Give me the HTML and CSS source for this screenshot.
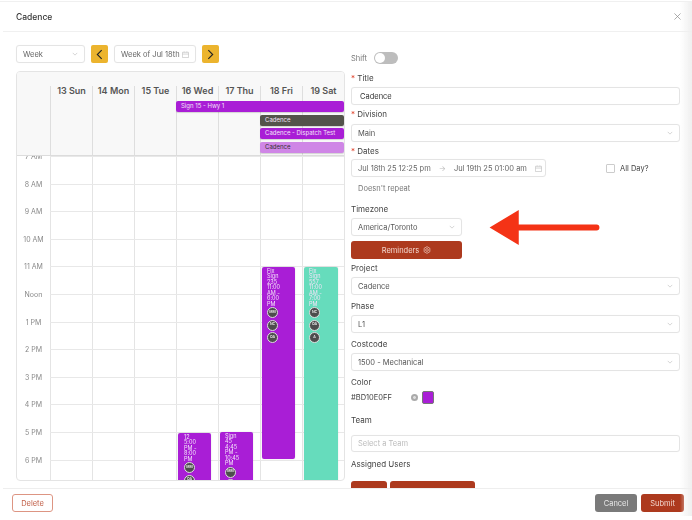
FILE: index.html
```html
<!DOCTYPE html>
<html lang="en">
<head>
<meta charset="utf-8">
<title>Cadence</title>
<link rel="stylesheet" href="styles.css">
</head>
<body>
<div class="modal">
  <header class="modal-head">
    <span class="modal-title">Cadence</span>
    <svg class="close" viewBox="0 0 8 8"><path d="M.5.5l7 7M7.5.5l-7 7"/></svg>
  </header>
  <main class="modal-body">
    <section class="left">
      <div class="toolbar">
        <div class="box view"><span>Week</span><svg class="chev" viewBox="0 0 8 5"><path d="M1 1l3 3 3-3"/></svg></div>
        <button class="nav"><svg viewBox="0 0 8 12"><path d="M6.5 1L1.5 6l5 5"/></svg></button>
        <div class="box week"><span>Week of Jul 18th</span><svg class="cal-ic" viewBox="0 0 8 8"><path d="M.5 1.5h7v6h-7zM.5 3.5h7M2.5.5v1M5.5.5v1"/></svg></div>
        <button class="nav"><svg viewBox="0 0 8 12"><path d="M1.5 1l5 5-5 5"/></svg></button>
      </div>
      <div class="calendar">
        <div class="cal-head">
          <div class="corner"></div>
          <div class="day">13 Sun</div><div class="day">14 Mon</div><div class="day">15 Tue</div><div class="day">16 Wed</div><div class="day">17 Thu</div><div class="day">18 Fri</div><div class="day">19 Sat</div>
        </div>
        <div class="cal-body">
          <div class="row"><span class="time">7 AM</span><div class="track"></div></div>
          <div class="row"><span class="time">8 AM</span><div class="track"></div></div>
          <div class="row"><span class="time">9 AM</span><div class="track"></div></div>
          <div class="row"><span class="time">10 AM</span><div class="track"></div></div>
          <div class="row"><span class="time">11 AM</span><div class="track"></div></div>
          <div class="row"><span class="time">Noon</span><div class="track"></div></div>
          <div class="row"><span class="time">1 PM</span><div class="track"></div></div>
          <div class="row"><span class="time">2 PM</span><div class="track"></div></div>
          <div class="row"><span class="time">3 PM</span><div class="track"></div></div>
          <div class="row"><span class="time">4 PM</span><div class="track"></div></div>
          <div class="row"><span class="time">5 PM</span><div class="track"></div></div>
          <div class="row"><span class="time">6 PM</span><div class="track"></div></div>
        </div>
        <div class="bar bar-sign">Sign 15 - Hwy 1</div>
        <div class="bar bar-grey">Cadence</div>
        <div class="bar bar-dispatch">Cadence - Dispatch Test</div>
        <div class="bar bar-light">Cadence</div>
        <div class="event ev-235">Fix<br>Sign<br>235<br>11:00<br>AM -<br>6:00<br>PM
          <span class="avatar">MM</span><span class="avatar">NC</span><span class="avatar">OA</span></div>
        <div class="event ev-557">Fix<br>Sign<br>557<br>11:00<br>AM -<br>7:00<br>PM
          <span class="avatar">NC</span><span class="avatar">OA</span><span class="avatar">A</span></div>
        <div class="event ev-12">12<br>5:00<br>PM -<br>8:00<br>PM
          <span class="avatar">MM</span><span class="avatar">OA</span></div>
        <div class="event ev-45">Sign<br>45<br>4:45<br>PM -<br>10:45<br>PM
          <span class="avatar">MM</span><span class="avatar">OA</span></div>
      </div>
    </section>
    <section class="form">
      <div class="shift"><span class="muted">Shift</span><span class="toggle"><i></i></span></div>
      <label class="lbl lbl-title"><b>*</b> Title</label>
      <div class="box field title-input">Cadence</div>
      <label class="lbl lbl-a"><b>*</b> Division</label>
      <div class="box field select"><span>Main</span><svg class="chev" viewBox="0 0 8 5"><path d="M1 1l3 3 3-3"/></svg></div>
      <label class="lbl lbl-b"><b>*</b> Dates</label>
      <div class="dates">
        <div class="box range"><span>Jul 18th 25 12:25 pm</span><span class="to">→</span><span>Jul 19th 25 01:00 am</span><svg class="cal-ic" viewBox="0 0 8 8"><path d="M.5 1.5h7v6h-7zM.5 3.5h7M2.5.5v1M5.5.5v1"/></svg></div>
        <div class="allday"><span class="check"></span><span>All Day?</span></div>
      </div>
      <div class="repeat">Doesn't repeat</div>
      <label class="lbl lbl-tz">Timezone</label>
      <div class="box field select narrow"><span>America/Toronto</span><svg class="chev" viewBox="0 0 8 5"><path d="M1 1l3 3 3-3"/></svg></div>
      <button class="reminders">Reminders <svg viewBox="0 0 10 10"><path d="M5 .8l3.6 2.1v4.2L5 9.2 1.4 7.1V2.9z"/><circle cx="5" cy="5" r="1.7"/></svg></button>
      <label class="lbl lbl-p">Project</label>
      <div class="box field select"><span>Cadence</span><svg class="chev" viewBox="0 0 8 5"><path d="M1 1l3 3 3-3"/></svg></div>
      <label class="lbl lbl-c">Phase</label>
      <div class="box field select"><span>L1</span><svg class="chev" viewBox="0 0 8 5"><path d="M1 1l3 3 3-3"/></svg></div>
      <label class="lbl lbl-c">Costcode</label>
      <div class="box field select"><span>1500 - Mechanical</span><svg class="chev" viewBox="0 0 8 5"><path d="M1 1l3 3 3-3"/></svg></div>
      <label class="lbl lbl-c">Color</label>
      <div class="color-row"><span class="hex">#BD10E0FF</span><span class="clear"></span><span class="swatch"></span></div>
      <label class="lbl lbl-team">Team</label>
      <div class="box field placeholder">Select a Team</div>
      <label class="lbl lbl-users">Assigned Users</label>
      <div class="chips"><span class="chip chip-a"></span><span class="chip chip-b"></span></div>
    </section>
  </main>
  <footer class="modal-foot">
    <button class="btn btn-delete">Delete</button>
    <div class="foot-right">
      <button class="btn btn-cancel">Cancel</button>
      <button class="btn btn-submit">Submit</button>
    </div>
  </footer>
  <div class="edge"></div>
</div>
<svg class="arrow" viewBox="0 0 114 36"><path d="M0 18L30 0v15h80a2.5 2.5 0 0 1 0 6H30v15z"/></svg>
</body>
</html>
```
FILE: styles.css
```css
* { box-sizing: border-box; }
html, body { margin: 0; height: 100%; background: #fff; overflow: hidden; }
body { font-family: Inter, "Liberation Sans", sans-serif; color: #333; position: relative; }
button { font-family: inherit; cursor: pointer; }

.modal { position: relative; height: 515px; margin-top: 1px; border-top: 1px solid #f0f0f0; display: flex; flex-direction: column; filter: blur(.45px); }
.modal-head { height: 30px; flex: none; margin-left: 3px; padding: 0 11px 0 13px; display: flex; align-items: center; justify-content: space-between; border-bottom: 1px solid #f0f0f0; }
.modal-title { font-size: 8.5px; font-weight: 500; color: #333; }
.close { width: 7px; height: 7px; fill: none; stroke: #8a8a8a; stroke-width: .8; }

.modal-body { flex: 1; min-height: 0; padding: 13px 12px 0 16px; display: flex; gap: 6px; overflow: hidden; }
.left { width: 329px; flex: none; display: flex; flex-direction: column; }
.toolbar { display: flex; gap: 6px; height: 18px; margin-bottom: 8px; }

.box { background: #fff; border: 1px solid #e4e4e4; border-radius: 3px; font-size: 7.5px; color: #666; display: flex; align-items: center; box-shadow: 0 0 1px rgba(0,0,0,.05); }
.view { width: 69px; padding: 0 6px; justify-content: space-between; }
.week { width: 82px; padding: 0 6px; justify-content: space-between; white-space: nowrap; }
.chev { width: 6px; height: 4px; fill: none; stroke: #bbb; stroke-width: .8; flex: none; }
.cal-ic { width: 7px; height: 7px; fill: none; stroke: #bbb; stroke-width: .7; flex: none; }
.nav { width: 17px; padding: 0; border: 0; border-radius: 2px; background: #ecb42e; display: flex; align-items: center; justify-content: center; }
.nav svg { width: 7px; height: 11px; fill: none; stroke: #222; stroke-width: 1.3; }

.calendar { position: relative; height: 410px; border: 1px solid #e4e4e4; border-radius: 4px; overflow: hidden; background: #fff; display: flex; flex-direction: column; }
.cal-head { position: relative; z-index: 1; height: 84px; flex: none; background: #f8f8f8; display: grid; grid-template-columns: 33px repeat(7, 42px); padding-top: 14px; border-bottom: 1px solid #dcdcdc; }
.day { border-left: 1px solid #dedede; text-align: center; font-size: 9px; font-weight: 600; color: #555; white-space: nowrap; line-height: 10px; }
.cal-body { flex: 1; min-height: 0; background: repeating-linear-gradient(90deg, #e4e4e4 0 1px, transparent 1px 42px) 33px 0 / 100% 100% no-repeat; overflow: hidden; }
.row { height: 27.6px; display: flex; }
.time { width: 33px; flex: none; margin-top: -4px; height: 9px; line-height: 9px; text-align: center; font-size: 7px; color: #888; background: #fff; }
.track { flex: 1; border-top: 1px solid #e8e8e8; }

.bar { position: absolute; z-index: 2; height: 11px; border-radius: 2px; padding-left: 5px; font-size: 6px; line-height: 9px; color: #f3e3f8; white-space: nowrap; box-shadow: 0 1px 1px rgba(0,0,0,.15); }
.bar-sign { left: 159px; right: 0; top: 28.5px; background: #a91ed6; }
.bar-grey { left: 243px; right: 0; top: 42.5px; background: #53534b; }
.bar-dispatch { left: 243px; right: 0; top: 56px; background: #a91ed6; }
.bar-light { left: 243px; right: 0; top: 70px; background: #cf86e6; color: #333; }

.event { position: absolute; z-index: 0; border-radius: 2px; padding: 1.5px 5px 0; font-size: 5.5px; line-height: 5.5px; color: #f3e3f8; box-shadow: 0 0 2px rgba(0,0,0,.12); }
.ev-235 { left: 245px; top: 195px; width: 33px; height: 192px; background: #a91ed6; }
.ev-557 { left: 287px; top: 195px; width: 34px; height: 220px; background: #66dcbc; }
.ev-12 { left: 161px; top: 361px; width: 33px; height: 60px; background: #a91ed6; padding-left: 6px; }
.ev-45 { left: 203px; top: 360px; width: 33px; height: 60px; background: #a91ed6; }
.avatar { display: flex; align-items: center; justify-content: center; width: 11px; height: 11px; margin: 0 0 1.6px; border-radius: 50%; background: #4d4d4d; border: .5px solid #ddd; color: #eee; font-size: 3.5px; line-height: 1; font-weight: 600; }

.form { width: 329px; flex: none; padding-top: 7px; overflow: hidden; position: relative; font-size: 7.5px; }
.shift { display: flex; align-items: center; gap: 7px; height: 12px; margin-bottom: 8px; }
.muted { color: #777; }
.toggle { width: 24px; height: 12px; border-radius: 6px; background: #bdbdbd; padding: 1px; display: flex; }
.toggle i { width: 10px; height: 10px; border-radius: 50%; background: #fff; }
.lbl { display: block; height: 12px; line-height: 12px; font-size: 8px; color: #444; }
.lbl b { color: #e0432b; font-weight: 400; }
.lbl-title { margin-bottom: 3px; }
.lbl-a { margin-top: 3px; margin-bottom: 4px; }
.lbl-b { margin-top: 3px; margin-bottom: 2px; }
.lbl-p { margin-top: 3px; margin-bottom: 3px; }
.lbl-c { margin-top: 5px; margin-bottom: 3px; }
.lbl-tz { margin-top: 8px; margin-bottom: 3px; }
.lbl-team { margin-top: 10px; margin-bottom: 9px; }
.lbl-users { margin-top: 6px; margin-bottom: 11px; }
.field { height: 18px; padding: 0 6px; justify-content: space-between; color: #555; width: 100%; }
.title-input { padding-left: 8px; color: #333; }
.narrow { width: 111px; }
.placeholder { color: #bbb; height: 17px; }
.dates { display: flex; align-items: center; }
.range { width: 195px; height: 18px; padding: 0 6px; gap: 8px; white-space: nowrap; color: #666; justify-content: space-between; flex: none; }
.to { color: #bbb; }
.allday { margin-left: 60px; display: flex; align-items: center; gap: 5px; color: #444; font-size: 7.5px; }
.check { width: 9px; height: 9px; border: 1px solid #ccc; border-radius: 1px; background: #fff; }
.repeat { height: 12px; margin-top: 6px; padding-left: 7px; line-height: 12px; color: #777; }
.reminders { width: 111px; height: 18px; margin-top: 5px; padding: 0; border: 0; border-radius: 3px; background: #ad3a1e; color: #f3d9d0; font-size: 7.5px; display: flex; align-items: center; justify-content: center; gap: 4px; }
.reminders svg { width: 8px; height: 8px; fill: none; stroke: #f3d9d0; stroke-width: .8; }
.color-row { display: flex; align-items: center; height: 13px; }
.hex { width: 60px; flex: none; color: #444; }
.clear { width: 7px; height: 7px; border-radius: 50%; background: radial-gradient(circle, #ddd 0 1.2px, #aaa 1.6px); margin-right: 4px; }
.swatch { width: 12px; height: 13px; border-radius: 2px; background: #a91ed6; border: 1px solid #777; }
.chips { display: flex; gap: 3px; }
.chip { height: 18px; border-radius: 3px; background: #ad3a1e; }
.chip-a { width: 36px; }
.chip-b { width: 85px; }

.modal-foot { height: 28px; flex: none; margin-left: 3px; padding: 5px 8px 0 9px; display: flex; justify-content: space-between; align-items: flex-start; border-top: 1px solid #eee; }
.foot-right { display: flex; gap: 4px; }
.btn { height: 18px; padding: 0; border-radius: 3px; font-size: 7.5px; border: 0; }
.btn-delete { width: 41px; background: #fff; border: 1px solid #dd9583; color: #c2614a; }
.btn-cancel { width: 42px; background: #7a7a7a; color: #e8e8e8; }
.btn-submit { width: 43px; background: #ad3a1e; color: #f3d9d0; }

.edge { position: absolute; top: 0; right: 0; bottom: 0; width: 12px; background: linear-gradient(90deg, rgba(238,238,238,0), #efefef); pointer-events: none; }
.arrow { position: absolute; left: 488px; top: 210px; width: 114px; height: 35px; fill: #f43316; z-index: 3; filter: blur(.3px); }
```
